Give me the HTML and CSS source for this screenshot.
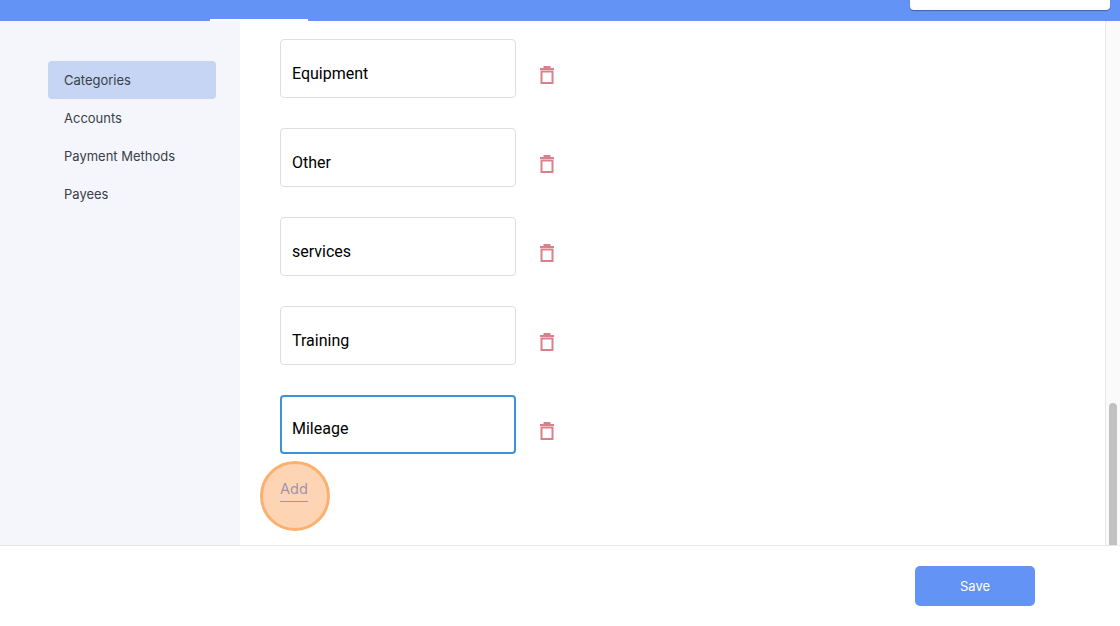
FILE: index.html
```html
<!DOCTYPE html>
<html lang="en">
<head>
<meta charset="utf-8">
<title>Categories</title>
<link rel="stylesheet" href="styles.css">
</head>
<body>
<header class="topbar">
  <div class="tab"></div>
  <div class="search"></div>
</header>
<div class="main">
  <nav class="sidebar">
    <a class="nav-item active">Categories</a>
    <a class="nav-item">Accounts</a>
    <a class="nav-item">Payment Methods</a>
    <a class="nav-item">Payees</a>
  </nav>
  <section class="content">
    <div class="row">
      <input class="field" value="Equipment">
      <svg class="trash" viewBox="0 0 14 18"><path d="M4.500 2.200V1h5v1.200M0 3h14M1.500 5.500h11V17h-11z"/></svg>
    </div>
    <div class="row">
      <input class="field" value="Other">
      <svg class="trash" viewBox="0 0 14 18"><path d="M4.500 2.200V1h5v1.200M0 3h14M1.500 5.500h11V17h-11z"/></svg>
    </div>
    <div class="row">
      <input class="field" value="services">
      <svg class="trash" viewBox="0 0 14 18"><path d="M4.500 2.200V1h5v1.200M0 3h14M1.500 5.500h11V17h-11z"/></svg>
    </div>
    <div class="row">
      <input class="field" value="Training">
      <svg class="trash" viewBox="0 0 14 18"><path d="M4.500 2.200V1h5v1.200M0 3h14M1.500 5.500h11V17h-11z"/></svg>
    </div>
    <div class="row">
      <input class="field focused" value="Mileage">
      <svg class="trash" viewBox="0 0 14 18"><path d="M4.500 2.200V1h5v1.200M0 3h14M1.500 5.500h11V17h-11z"/></svg>
    </div>
    <a class="add">Add</a>
    <div class="highlight"></div>
  </section>
  <div class="scrollbar"><div class="thumb"></div></div>
</div>
<footer class="footer">
  <button class="save">Save</button>
</footer>
</body>
</html>
```
FILE: styles.css
```css
* { box-sizing: border-box; }
html, body { margin: 0; height: 100%; overflow: hidden; background: #fff; }
body { display: flex; flex-direction: column; width: 1120px; height: 626px; font-family: "Inter", "Liberation Sans", sans-serif; }

.topbar { position: relative; height: 21px; flex: none; background: #6393f5; }
.tab { position: absolute; left: 210px; bottom: 0; width: 98px; height: 2px; background: #fff; }
.search { position: absolute; left: 910px; top: -10px; width: 200px; height: 19.500px; background: #fff; border-radius: 4px; box-shadow: 0 1px 1px rgba(40, 60, 110, .55); }

.main { display: flex; height: 524px; flex: none; }
.sidebar { display: flex; flex-direction: column; width: 240px; flex: none; padding: 40px 24px 0 48px; background: #f4f6fc; }
.nav-item { display: flex; align-items: center; height: 38px; flex: none; padding-left: 16px; padding-bottom: 1px; font-size: 13px; color: #3a3e48; border-radius: 4px; }
.nav-item.active { background: #c6d5f3; }

.content { position: relative; flex: 1; padding: 18px 0 0 40px; overflow: hidden; background: #fff; }
.row { display: flex; align-items: center; gap: 24px; height: 59px; margin-bottom: 30px; }
.field { width: 235.500px; height: 59px; flex: none; padding: 9px 11px 0; font: 16px "Roboto", sans-serif; color: #000; background: #fff; border: 1px solid #dedede; border-radius: 4px; outline: none; }
.field.focused { border: 2px solid #3a93da; padding: 7px 10px 0; }
.trash { width: 14px; height: 18px; flex: none; margin-top: 12px; fill: none; stroke: #d9808a; stroke-width: 2; }

.add { position: absolute; left: 40px; top: 458px; font-size: 14.500px; line-height: 19px; padding-bottom: 3px; color: #6393f5; border-bottom: 1px solid #6393f5; }
.highlight { position: absolute; left: 20px; top: 440px; width: 70px; height: 70px; border-radius: 50%; background: rgba(251, 150, 70, .4); border: 3px solid #fbb06d; }

.scrollbar { position: relative; width: 15px; flex: none; background: #fafafa; border-left: 1px solid #e8e8e8; }
.thumb { position: absolute; left: 3px; top: 382px; bottom: 0; width: 8px; background: #c1c1c1; border-radius: 4px 4px 0 0; }

.footer { display: flex; justify-content: flex-end; align-items: flex-start; flex: 1; padding: 20px 85px 0 0; background: #fff; border-top: 1px solid #e6e6e6; }
.save { width: 120px; height: 40px; font: 13px "Inter", "Liberation Sans", sans-serif; color: #fff; background: #6393f5; border: 0; border-radius: 5px; }
```
